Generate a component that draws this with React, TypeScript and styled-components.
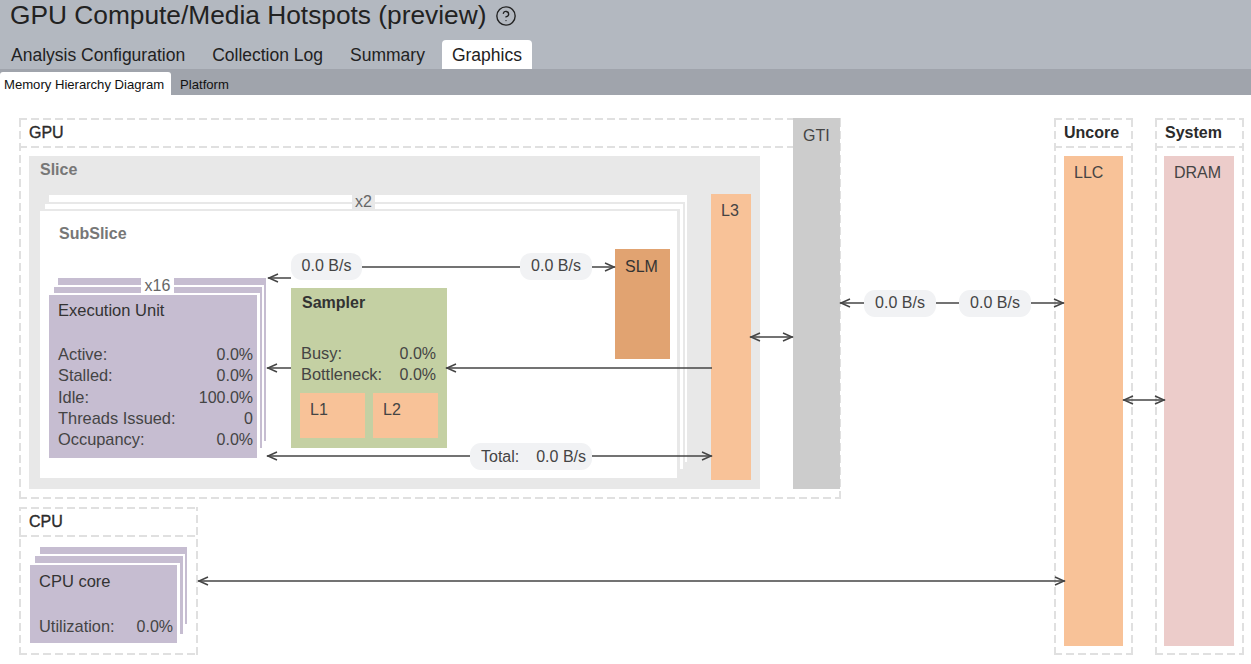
import { CircleHelp } from "lucide-react"
import styled, { createGlobalStyle, css } from "styled-components"

const GlobalStyle = createGlobalStyle`
    html, body {
        margin: 0;
        padding: 0;
        background: #fff;
        overflow: hidden;
    }

    body {
        font-family: "Liberation Sans", Arial, sans-serif;
        color: #333;
    }
`

interface IPlace {
    $x: number
    $y: number
    $w: number
    $h: number
}

// diagram nodes sit on a free canvas, coordinates are relative to it
const place = css<IPlace>`
    position: absolute;
    left: ${({ $x }) => $x}px;
    top: ${({ $y }) => $y}px;
    width: ${({ $w }) => $w}px;
    height: ${({ $h }) => $h}px;
`

const dash = "#e0e0e0"

const Header = styled.header`
    background: #b3b8c0;
    height: 69px;
    display: flex;
    flex-direction: column;
    justify-content: space-between;
`

const TitleRow = styled.div`
    display: flex;
    align-items: center;
    gap: 9px;
    padding-left: 10px;
    height: 31px;
    color: #222;
`

const Title = styled.h1`
    margin: 0;
    font-size: 26.3px;
    font-weight: 400;
    line-height: 31px;
`

const Tabs = styled.nav`
    display: flex;
    gap: 7px;
    padding-left: 1px;
`

const Tab = styled.div<{ $active?: boolean }>`
    height: 29px;
    line-height: 30px;
    padding: 0 10px;
    font-size: 17.5px;
    color: #222;
    border-radius: 4px 4px 0 0;
    background: ${({ $active }) => ($active ? "#fff" : "transparent")};
`

const SubBar = styled.nav`
    background: #a0a4ac;
    height: 26px;
    display: flex;
    align-items: flex-end;
`

const SubTab = styled.div<{ $active?: boolean }>`
    height: 23px;
    line-height: 25px;
    padding: ${({ $active }) => ($active ? "0 7px 0 4px" : "0 9px")};
    font-size: 13.1px;
    color: #111;
    border-radius: 3px 3px 0 0;
    background: ${({ $active }) => ($active ? "#fff" : "transparent")};
`

const Canvas = styled.main`
    position: relative;
    height: 569px;
    overflow: hidden;
`

const Group = styled.section<IPlace>`
    ${place}
    box-sizing: border-box;
    background:
        repeating-linear-gradient(90deg, ${dash} 0 8px, transparent 8px 12px) top left / 100% 2px no-repeat,
        repeating-linear-gradient(90deg, ${dash} 0 8px, transparent 8px 12px) bottom left / 100% 2px no-repeat,
        repeating-linear-gradient(90deg, ${dash} 0 8px, transparent 8px 12px) left 0 top 28px / 100% 2px no-repeat,
        repeating-linear-gradient(0deg, ${dash} 0 8px, transparent 8px 12px) top left / 2px 100% no-repeat,
        repeating-linear-gradient(0deg, ${dash} 0 8px, transparent 8px 12px) top right / 2px 100% no-repeat;
`

const GroupTitle = styled.h2<{ $bold?: boolean }>`
    margin: 0;
    padding: 1px 0 0 10px;
    height: 28px;
    line-height: 28px;
    font-size: 16px;
    color: #2b2b2b;
    font-weight: ${({ $bold }) => ($bold ? 700 : 400)};
    -webkit-text-stroke: ${({ $bold }) => ($bold ? "0" : "0.35px")};
`

const Region = styled.div<IPlace & { $fill: string }>`
    ${place}
    background: ${({ $fill }) => $fill};
`

const RegionLabel = styled.div<{ $pad: string; $color?: string; $bold?: boolean }>`
    padding: ${({ $pad }) => $pad};
    font-size: 16px;
    line-height: 20px;
    font-weight: ${({ $bold }) => ($bold ? 700 : 400)};
    color: ${({ $color }) => $color ?? "#444"};
`

// one sheet of a stacked card, the box-shadow is the gap to the sheet behind it
const Layer = styled.div<IPlace & { $fill: string; $gap: string; $side?: number }>`
    ${place}
    background: ${({ $fill }) => $fill};
    box-sizing: border-box;
    box-shadow:
        0 -2px 0 ${({ $gap }) => $gap},
        ${({ $side }) => $side ?? 2}px 0 0 ${({ $gap }) => $gap},
        ${({ $side }) => $side ?? 2}px -2px 0 ${({ $gap }) => $gap};
`

const CountLabel = styled.div<IPlace & { $fill: string }>`
    ${place}
    background: ${({ $fill }) => $fill};
    color: #666;
    font-size: 16px;
    line-height: 17px;
    text-align: center;
`

const CardTitle = styled.div<{ $bold?: boolean; $pad: string }>`
    padding: ${({ $pad }) => $pad};
    font-size: ${({ $bold }) => ($bold ? "16px" : "16.5px")};
    line-height: 21px;
    color: #333;
    font-weight: ${({ $bold }) => ($bold ? 700 : 400)};
`

const Stats = styled.div<{ $pad: string }>`
    display: flex;
    flex-direction: column;
    padding: ${({ $pad }) => $pad};
`

const StatRow = styled.div`
    display: flex;
    justify-content: space-between;
    align-items: baseline;
    font-size: 16px;
    line-height: 21.3px;
    color: #444;
`

const StatName = styled.span`
    font-size: 16.4px;
`

const CacheRow = styled.div`
    display: flex;
    gap: 8px;
    padding: 7px 0 0 9px;
`

const Cache = styled.div`
    width: 65px;
    height: 45px;
    box-sizing: border-box;
    padding: 7px 0 0 10px;
    background: #f8c298;
    font-size: 16px;
    line-height: 20px;
    color: #444;
`

const Wires = styled.svg`
    position: absolute;
    inset: 0;
    width: 100%;
    height: 100%;
    pointer-events: none;
`

const Pill = styled.div<IPlace & { $spread?: boolean }>`
    ${place}
    box-sizing: border-box;
    display: flex;
    align-items: center;
    justify-content: ${({ $spread }) => ($spread ? "space-between" : "center")};
    padding: ${({ $spread }) => ($spread ? "0 6px 0 11px" : "0 0 2px")};
    background: #f1f2f4;
    border-radius: 11px;
    font-size: 16px;
    color: #444;
`

interface IWire {
    from: number
    to: number
    y: number
    start?: boolean
    end?: boolean
}

const wires: IWire[] = [
    { from: 268, to: 291, y: 183, start: true },
    { from: 362, to: 520, y: 172 },
    { from: 592, to: 615, y: 172, end: true },
    { from: 446, to: 712, y: 273, start: true },
    { from: 267, to: 291, y: 273, start: true },
    { from: 267, to: 470, y: 361, start: true },
    { from: 592, to: 712, y: 361, end: true },
    { from: 750, to: 793, y: 242, start: true, end: true },
    { from: 840, to: 864, y: 208, start: true },
    { from: 936, to: 959, y: 208 },
    { from: 1031, to: 1064, y: 208, end: true },
    { from: 1123, to: 1165, y: 305, start: true, end: true },
    { from: 198, to: 1065, y: 486, start: true, end: true },
]

const Wire = ({ from, to, y, start, end }: IWire) => (
    <g fill="none" stroke="#444" strokeWidth="1.5">
        <path d={`M${from} ${y}H${to}`} />
        {start && <path d={`M${from + 10} ${y - 4}L${from + 1} ${y}L${from + 10} ${y + 4}`} />}
        {end && <path d={`M${to - 10} ${y - 4}L${to - 1} ${y}L${to - 10} ${y + 4}`} />}
    </g>
)

const euStats = [
    ["Active:", "0.0%"],
    ["Stalled:", "0.0%"],
    ["Idle:", "100.0%"],
    ["Threads Issued:", "0"],
    ["Occupancy:", "0.0%"],
]

const App = () => (
    <>
        <GlobalStyle />
        <Header>
            <TitleRow>
                <Title>GPU Compute/Media Hotspots (preview)</Title>
                <CircleHelp size={22} strokeWidth={1.5} color="#222" />
            </TitleRow>
            <Tabs>
                <Tab>Analysis Configuration</Tab>
                <Tab>Collection Log</Tab>
                <Tab>Summary</Tab>
                <Tab $active>Graphics</Tab>
            </Tabs>
        </Header>
        <SubBar>
            <SubTab $active>Memory Hierarchy Diagram</SubTab>
            <SubTab>Platform</SubTab>
        </SubBar>
        <Canvas>
            <Group $x={19} $y={23} $w={822} $h={381}>
                <GroupTitle>GPU</GroupTitle>
            </Group>
            <Group $x={19} $y={412} $w={179} $h={148}>
                <GroupTitle>CPU</GroupTitle>
            </Group>
            <Group $x={1054} $y={23} $w={79} $h={537}>
                <GroupTitle $bold>Uncore</GroupTitle>
            </Group>
            <Group $x={1155} $y={23} $w={89} $h={537}>
                <GroupTitle $bold>System</GroupTitle>
            </Group>

            <Region $x={793} $y={23} $w={47} $h={371} $fill="#cccccc">
                <RegionLabel $pad="8px 0 0 10px">GTI</RegionLabel>
            </Region>
            <Region $x={29} $y={61} $w={731} $h={333} $fill="#e8e8e8">
                <RegionLabel $pad="4px 0 0 11px" $color="#777" $bold>Slice</RegionLabel>
            </Region>

            <Layer $x={49} $y={100} $w={638} $h={267} $fill="#fff" $gap="#e8e8e8" />
            <Layer $x={45} $y={109} $w={638} $h={265} $fill="#fff" $gap="#e8e8e8" />
            <Layer $x={40} $y={116} $w={637} $h={267} $fill="#fff" $gap="#e8e8e8" $side={3}>
                <RegionLabel $pad="13px 0 0 19px" $color="#777" $bold>SubSlice</RegionLabel>
            </Layer>
            <CountLabel $x={352} $y={98} $w={23} $h={16} $fill="#e8e8e8">x2</CountLabel>

            <Layer $x={58} $y={183} $w={208} $h={163} $fill="#c6bdd1" $gap="#fff" />
            <Layer $x={54} $y={192} $w={208} $h={161} $fill="#c6bdd1" $gap="#fff" />
            <Layer $x={49} $y={200} $w={208} $h={163} $fill="#c6bdd1" $gap="#fff" $side={3}>
                <CardTitle $pad="5px 0 0 9px">Execution Unit</CardTitle>
                <Stats $pad="23px 4px 0 9px">
                    {euStats.map(([name, value]) => (
                        <StatRow key={name}>
                            <StatName>{name}</StatName>
                            <span>{value}</span>
                        </StatRow>
                    ))}
                </Stats>
            </Layer>
            <CountLabel $x={141} $y={182} $w={33} $h={17} $fill="#fff">x16</CountLabel>

            <Region $x={291} $y={193} $w={156} $h={160} $fill="#c4d0a3">
                <CardTitle $pad="4px 0 0 11px" $bold>Sampler</CardTitle>
                <Stats $pad="30px 11px 0 10px">
                    <StatRow>
                        <StatName>Busy:</StatName>
                        <span>0.0%</span>
                    </StatRow>
                    <StatRow>
                        <StatName>Bottleneck:</StatName>
                        <span>0.0%</span>
                    </StatRow>
                </Stats>
                <CacheRow>
                    <Cache>L1</Cache>
                    <Cache>L2</Cache>
                </CacheRow>
            </Region>

            <Region $x={615} $y={154} $w={55} $h={110} $fill="#e1a371">
                <RegionLabel $pad="8px 0 0 10px" $color="#333">SLM</RegionLabel>
            </Region>
            <Region $x={711} $y={99} $w={40} $h={286} $fill="#f8c298">
                <RegionLabel $pad="7px 0 0 10px">L3</RegionLabel>
            </Region>
            <Region $x={1064} $y={61} $w={59} $h={490} $fill="#f8c298">
                <RegionLabel $pad="7px 0 0 10px">LLC</RegionLabel>
            </Region>
            <Region $x={1164} $y={61} $w={70} $h={490} $fill="#ecccca">
                <RegionLabel $pad="7px 0 0 10px">DRAM</RegionLabel>
            </Region>

            <Layer $x={40} $y={452} $w={147} $h={77} $fill="#c6bdd1" $gap="#fff" />
            <Layer $x={35} $y={461} $w={148} $h={78} $fill="#c6bdd1" $gap="#fff" />
            <Layer $x={30} $y={470} $w={147} $h={78} $fill="#c6bdd1" $gap="#fff" $side={3}>
                <CardTitle $pad="6px 0 0 9px">CPU core</CardTitle>
                <Stats $pad="24px 4px 0 9px">
                    <StatRow>
                        <StatName>Utilization:</StatName>
                        <span>0.0%</span>
                    </StatRow>
                </Stats>
            </Layer>

            <Wires>
                {wires.map((wire) => (
                    <Wire key={`${wire.from}-${wire.y}`} {...wire} />
                ))}
            </Wires>

            <Pill $x={291} $y={158} $w={71} $h={27}>0.0 B/s</Pill>
            <Pill $x={520} $y={158} $w={72} $h={27}>0.0 B/s</Pill>
            <Pill $x={470} $y={348} $w={122} $h={27} $spread>
                <span>Total:</span>
                <span>0.0 B/s</span>
            </Pill>
            <Pill $x={864} $y={195} $w={72} $h={27}>0.0 B/s</Pill>
            <Pill $x={959} $y={195} $w={72} $h={27}>0.0 B/s</Pill>
        </Canvas>
    </>
)

export default App
